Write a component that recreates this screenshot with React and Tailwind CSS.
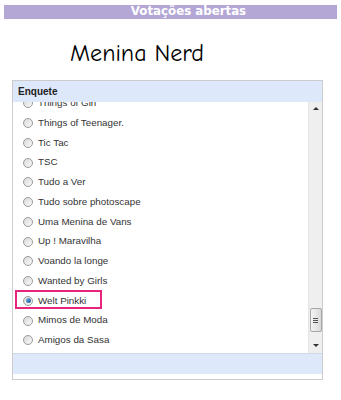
import { useState } from "react";

const options = [
  "Things of Girl",
  "Things of Teenager.",
  "Tic Tac",
  "TSC",
  "Tudo a Ver",
  "Tudo sobre photoscape",
  "Uma Menina de Vans",
  "Up ! Maravilha",
  "Voando la longe",
  "Wanted by Girls",
  "Welt Pinkki",
  "Mimos de Moda",
  "Amigos da Sasa",
];

function Radio({ checked }) {
  return (
    <span className="relative flex h-[10px] w-[10px] shrink-0 items-center justify-center rounded-full border border-[#9a9a9a] bg-gradient-to-br from-[#d8d8d8] to-[#fbfbfb]">
      {checked && (
        <span className="h-[5px] w-[5px] rounded-full bg-gradient-to-br from-[#7fb8e8] to-[#0d4f9c]" />
      )}
    </span>
  );
}

function Scrollbar() {
  return (
    <div className="flex w-[14px] shrink-0 flex-col items-center border-l border-[#e4e4e4] bg-[#efefef]">
      <div className="mt-[5px] h-0 w-0 border-x-[3px] border-b-[3px] border-x-transparent border-b-[#333]" />
      <div className="mt-[198px] flex h-[24px] w-[12px] flex-col items-center justify-center gap-[1px] rounded-[2px] border border-[#a8a8a8] bg-gradient-to-r from-[#f4f4f4] to-[#d9d9d9]">
        <div className="h-[1px] w-[5px] bg-[#555]" />
        <div className="h-[1px] w-[5px] bg-[#555]" />
        <div className="h-[1px] w-[5px] bg-[#555]" />
      </div>
      <div className="mt-[12px] h-0 w-0 border-x-[3px] border-t-[3px] border-x-transparent border-t-[#333]" />
    </div>
  );
}

export default function App() {
  const [selected, setSelected] = useState("Welt Pinkki");

  return (
    <div className="h-[400px] w-[341px] bg-white pt-[5px]" style={{ fontFamily: "Arial, 'Liberation Sans', sans-serif" }}>
      <div className="mx-[4px] flex h-[14px] items-center justify-center bg-[#b4a7d6] pl-[36px]">
        <span className="text-[11.8px] font-bold leading-none text-white" style={{ fontFamily: "Verdana, 'DejaVu Sans', sans-serif" }}>
          Votações abertas
        </span>
      </div>

      <h1
        className="ml-[70px] mt-[21px] h-[40px] text-[24px] leading-[26px] text-black"
        style={{ fontFamily: "'Comic Sans MS', 'Comic Neue', cursive" }}
      >
        Menina Nerd
      </h1>

      <div className="ml-[12px] w-[311px] border border-[#cccccc]">
        <div className="flex h-[21px] items-center bg-[#dde8fb] px-[5px] text-[10px] font-bold text-[#222]">
          Enquete
        </div>
        <div className="flex h-[251px]">
          <div className="flex-1 overflow-hidden">
            <ul className="-mt-[8.5px]">
              {options.map((name) => (
                <li
                  key={name}
                  onClick={() => setSelected(name)}
                  className="relative flex h-[19.75px] items-center gap-[5px] pl-[10px] text-[9.8px] text-[#333]"
                >
                  <Radio checked={selected === name} />
                  <span>{name}</span>
                  {name === "Welt Pinkki" && (
                    <span className="absolute left-[2px] top-[-1px] h-[19px] w-[87px] border-2 border-[#e8247e]" />
                  )}
                </li>
              ))}
            </ul>
          </div>
          <Scrollbar />
        </div>
        <div className="h-[21px] border-t border-[#cfd8e6] bg-[#dde8fb]" />
        <div className="h-[5px]" />
      </div>
    </div>
  );
}
